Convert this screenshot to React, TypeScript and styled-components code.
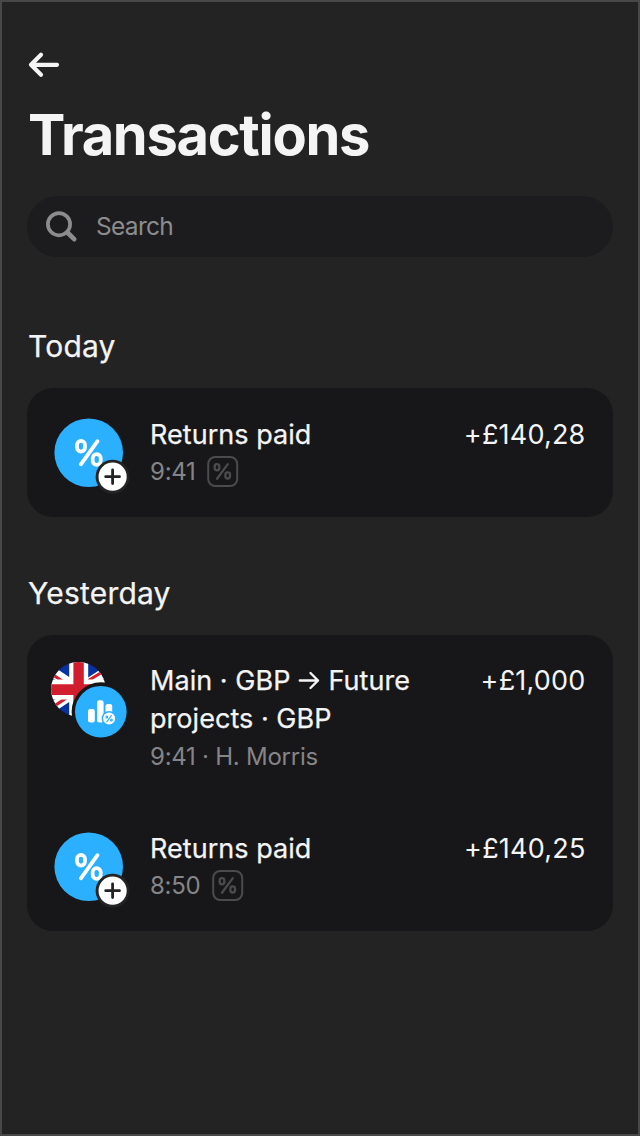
import React from "react";
import styled, { createGlobalStyle } from "styled-components";

const Global = createGlobalStyle`
  *{box-sizing:border-box}
  body{margin:0;background:#232323}
`;
const Screen = styled.main`
  width:640px;height:1136px;border:2px solid #484848;background:#232323;color:#f4f4f4;
  font-family:Inter,"Liberation Sans",sans-serif;padding:48px 25px 0;overflow:hidden;
`;
const Back = styled.button`
  display:block;border:0;background:none;padding:0;width:34px;height:30px;color:inherit;
  svg{display:block}
`;
const Title = styled.h1`
  margin:20px 0 0 1px;font-size:56px;line-height:70px;font-weight:700;letter-spacing:-1.3px;
`;
const Search = styled.label`
  display:flex;align-items:center;gap:15px;height:61px;margin-top:26px;padding-left:15px;
  border-radius:31px;background:#1c1c1e;color:#8c8c8e;font-size:24.5px;letter-spacing:-0.7px;
  span{padding-bottom:2px}
`;
const Section = styled.section<{ $top: number }>`
  margin-top:${p => p.$top}px;
`;
const Heading = styled.h2`
  margin:0 0 0 1px;font-size:30px;line-height:36px;font-weight:400;letter-spacing:0.2px;
  -webkit-text-stroke:0.25px currentColor;
`;
const Card = styled.div<{ $height: number }>`
  margin-top:24px;height:${p => p.$height}px;border-radius:26px;background:#171719;padding:26px 27.5px 0 24px;
`;
const Row = styled.article<{ $height: number }>`
  display:flex;height:${p => p.$height}px;
`;
const Art = styled.svg`
  width:80px;height:80px;flex:none;display:block;
`;
const Copy = styled.div`
  flex:1;padding-left:19px;white-space:nowrap;
`;
const Name = styled.div<{ $top?: number }>`
  font-size:27px;line-height:38px;font-weight:400;letter-spacing:0.04px;margin-top:${p => p.$top ?? 1}px;
  -webkit-text-stroke:0.25px currentColor;
`;
const Meta = styled.div<{ $height?: number }>`
  display:flex;align-items:center;gap:11px;height:${p => p.$height ?? 36}px;font-size:24px;letter-spacing:-0.25px;color:#858587;
`;
const Amount = styled.div<{ $top?: number }>`
  font-size:27px;line-height:38px;margin-top:${p => p.$top ?? 1}px;white-space:nowrap;font-weight:400;letter-spacing:0.2px;
`;
const Arrow = styled.svg`
  width:22px;height:20px;margin:0 8px;vertical-align:-1px;
`;
const ChipIcon = styled.svg`
  width:32px;height:32px;display:block;
`;

function Percent() {
  return (
    <g fill="none" stroke="currentColor" strokeLinecap="round">
      <rect x="-12.4" y="-12.1" width="8" height="10.8" rx="4" strokeWidth="3.7" />
      <rect x="3.3" y="1.2" width="8" height="10.8" rx="4" strokeWidth="3.7" />
      <path d="M8.1-11.7L-8.5 11.4" strokeWidth="3.8" />
    </g>
  );
}
function PercentChip() {
  return (
    <ChipIcon viewBox="0 0 32 32" color="#4b4b4d" fill="none" stroke="currentColor">
      <rect x="1.2" y="2" width="29" height="29" rx="7" strokeWidth="2" />
      <rect x="7.7" y="9.1" width="4.6" height="6.2" rx="2.3" strokeWidth="2.3" />
      <rect x="18.4" y="17.3" width="4.6" height="6.2" rx="2.3" strokeWidth="2.3" />
      <path d="M20.8 9.1L10 23.7" strokeWidth="2.3" strokeLinecap="round" />
    </ChipIcon>
  );
}
function ReturnArt() {
  return (
    <Art viewBox="0 0 80 80" color="#fff">
      <circle cx="37.7" cy="38.7" r="34.3" fill="#2bb0ff" />
      <g transform="translate(38.4 38.9)"><Percent /></g>
      <circle cx="61.6" cy="62.7" r="17" fill="#232325" />
      <circle cx="61.6" cy="62.7" r="14.1" fill="#fff" />
      <path d="M54.7 62.7h13.8M61.6 55.8v13.8" stroke="#232325" strokeWidth="2.8" strokeLinecap="round" />
    </Art>
  );
}
function TransferArt() {
  return (
    <Art viewBox="0 0 80 80">
      <defs><clipPath id="flag"><circle cx="27.4" cy="28.2" r="27.3" /></clipPath></defs>
      <g clipPath="url(#flag)">
        <path fill="#0832a0" d="M0 0h57v57H0z" />
        <path d="M-6 6L62 51M62 6L-6 51" stroke="#fff" strokeWidth="10" />
        <path d="M-7 8L28 31M28 25.2L63 4M-7 51.7L28 28.7M28 28L63 51" stroke="#d11e2e" strokeWidth="3" />
        <path fill="#fff" d="M18.2 0h19v57h-19zM0 18.6h57v20H0z" />
        <path fill="#d11e2e" d="M22.4 0h10.4v57H22.4zM0 23.2h57V34H0z" />
      </g>
      <circle cx="50" cy="50.7" r="29.4" fill="#171719" />
      <circle cx="49.8" cy="50.7" r="25.8" fill="#2bb0ff" />
      <rect x="37" y="48" width="6.8" height="13.4" rx="2.2" fill="#fff" />
      <rect x="46.1" y="39.2" width="6.5" height="22.2" rx="2.2" fill="#fff" />
      <rect x="54.5" y="43" width="6.7" height="18.2" rx="2.2" fill="#fff" />
      <circle cx="58.1" cy="57.5" r="7.5" fill="#2bb0ff" />
      <circle cx="58.1" cy="57.5" r="6" fill="#fff" />
      <g stroke="#2bb0ff" fill="none" strokeWidth="1.2" strokeLinecap="round">
        <path d="M60.4 54.5l-4.5 6.2" />
        <ellipse cx="55.8" cy="56.1" rx=".8" ry="1.1" />
        <ellipse cx="60.4" cy="59.1" rx=".8" ry="1.1" />
      </g>
    </Art>
  );
}
function ReturnRow({ time, amount }: { time: string; amount: string }) {
  return (
    <Row $height={80}>
      <ReturnArt />
      <Copy>
        <Name $top={2}>Returns paid</Name>
        <Meta $height={34}>{time}<PercentChip /></Meta>
      </Copy>
      <Amount $top={2}>{amount}</Amount>
    </Row>
  );
}

export default function App() {
  return (
    <Screen>
      <Global />
      <Back aria-label="Back">
        <svg width="34" height="30" viewBox="0 0 34 30" fill="none" stroke="currentColor" strokeWidth="4.2" strokeLinecap="round" strokeLinejoin="round">
          <path d="M14 4.8L4 14.8l10 10M4 14.8h26" />
        </svg>
      </Back>
      <Title>Transactions</Title>
      <Search>
        <svg width="39" height="39" viewBox="0 0 39 39" fill="none" stroke="currentColor">
          <circle cx="17" cy="17.2" r="11.1" strokeWidth="3.7" />
          <path d="M25.4 25.5L32.2 32.2" strokeWidth="4.7" strokeLinecap="round" />
        </svg>
        <span>Search</span>
      </Search>
      <Section $top={71}>
        <Heading>Today</Heading>
        <Card $height={129}><ReturnRow time="9:41" amount="+£140,28" /></Card>
      </Section>
      <Section $top={58}>
        <Heading>Yesterday</Heading>
        <Card $height={296}>
          <Row $height={167}>
            <TransferArt />
            <Copy>
              <Name>
                Main · GBP
                <Arrow viewBox="0 0 22 20" fill="none" stroke="currentColor" strokeWidth="2.4" strokeLinecap="round" strokeLinejoin="round">
                  <path d="M1.8 9.5h18.2M12.5 2l7.5 7.5-7.5 7.5" />
                </Arrow>
                Future<br />projects · GBP
              </Name>
              <Meta $height={36}>9:41 · H. Morris</Meta>
            </Copy>
            <Amount>+£1,000</Amount>
          </Row>
          <ReturnRow time="8:50" amount="+£140,25" />
        </Card>
      </Section>
    </Screen>
  );
}
